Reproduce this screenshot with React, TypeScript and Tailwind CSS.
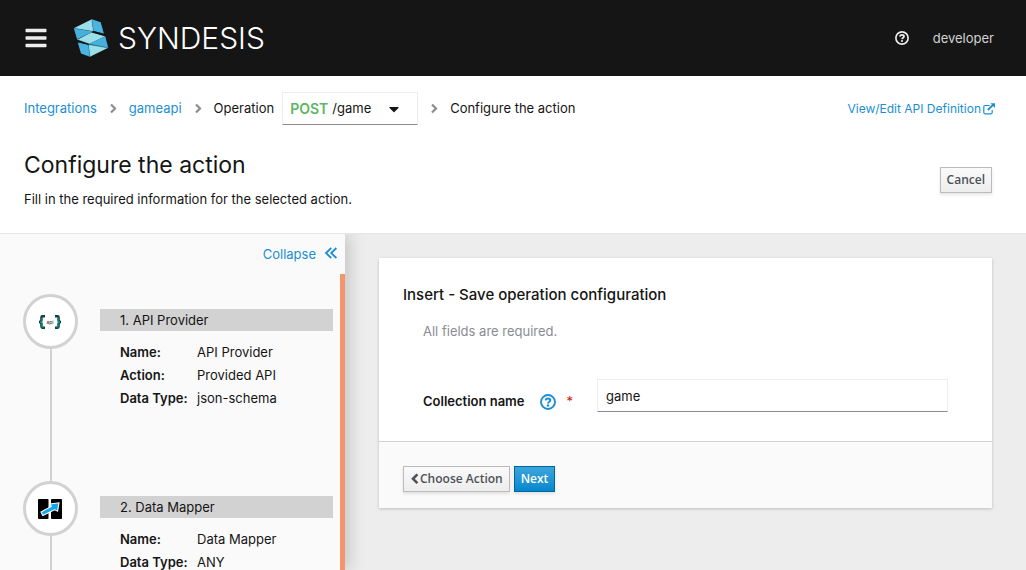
import { useState } from "react";
import { FaBars, FaCaretDown } from "react-icons/fa";

type Step = { title: string; icon: "api" | "mapper"; details: [string, string][] };

const steps: Step[] = [
  {
    title: "1. API Provider",
    icon: "api",
    details: [
      ["Name:", "API Provider"],
      ["Action:", "Provided API"],
      ["Data Type:", "json-schema"],
    ],
  },
  {
    title: "2. Data Mapper",
    icon: "mapper",
    details: [
      ["Name:", "Data Mapper"],
      ["Data Type:", "ANY"],
    ],
  },
];

function Logo() {
  return (
    <svg viewBox="220 56 107 116" className="h-[38px] w-9" aria-hidden="true">
      <polygon fill="#9bdfeb" points="221,84 276,57 281,94" />
      <polygon fill="#4ab5e0" points="276,57 303,66 313,101 281,93" />
      <polygon fill="#45b0dc" points="221,84 281,94 231,118" />
      <polygon fill="#9bdfeb" points="231,119 275,97 317,109 268,132" />
      <polygon fill="#45b0dc" points="317,109 326,144 267,132" />
      <polygon fill="#9bdfeb" points="326,144 270,171 266,134" />
      <polygon fill="#4ab5e0" points="233,127 266,134 270,171 243,161" />
      <path
        d="M221 84 281 94 276 57M281 94 313 101M231 118 268 132 326 144 266 134 270 171"
        fill="none"
        stroke="#2b7f9e"
        strokeWidth="1.5"
      />
      <path d="M275 96 281 93 313 101 317 109Z M231 119 268 132 266 135 233 127Z" fill="#151515" />
    </svg>
  );
}

function HelpIcon({ className }: { className: string }) {
  return (
    <svg viewBox="0 0 16 16" className={className} fill="none" stroke="currentColor" aria-hidden="true">
      <circle cx="8" cy="8" r="7" strokeWidth="1.9" />
      <path d="M5.7 6.4C5.8 5 6.8 4.4 8 4.4s2.3.7 2.3 1.8c0 1.6-2.2 1.5-2.2 3.2" strokeWidth="2" />
      <circle cx="8" cy="11.5" r="1.2" fill="currentColor" stroke="none" />
    </svg>
  );
}

function ApiIcon() {
  return (
    <svg viewBox="0 0 25 14" className="h-3.5 w-[25px]" fill="none" aria-hidden="true">
      <path d="M7 1.2H4.4Q3.4 1.2 3.4 2.4V5Q3.4 7 1 7Q3.4 7 3.4 9V11.6Q3.4 12.8 4.4 12.8H7" stroke="#173d40" strokeWidth="2.4" />
      <path d="M4 2.5V5Q4 7 2 7Q4 7 4 9V11.8H6" stroke="#129488" strokeWidth="1.3" />
      <path d="M17 1.2H19.6Q20.6 1.2 20.6 2.4V5Q20.6 7 23 7Q20.6 7 20.6 9V11.6Q20.6 12.8 19.6 12.8H17" stroke="#173d40" strokeWidth="2.4" />
      <path d="M20 2.5V5Q20 7 22 7Q20 7 20 9V11.8H18" stroke="#129488" strokeWidth="1.3" />
      <text x="12" y="8.6" fontSize="5" textAnchor="middle" fill="#222" fontFamily="Inter, sans-serif">
        api
      </text>
    </svg>
  );
}

function MapperIcon() {
  return (
    <svg viewBox="0 0 25 20" className="h-5 w-[25px]" aria-hidden="true">
      <rect width="10.5" height="20" rx="0.8" fill="#000" />
      <rect x="13" width="11" height="20" rx="0.8" fill="#000" />
      <path
        d="M3 13 13.2 7.4 12.2 5 21 3.8 19.6 12.2 17 10.8 15.4 11.2 4.8 16.6Z"
        fill="#13a7ee"
        stroke="#fff"
        strokeWidth="1.1"
      />
    </svg>
  );
}

function Separator() {
  return (
    <svg viewBox="0 0 14 14" className="size-3.5" fill="none" stroke="#8b8d8f" strokeWidth="2.2" aria-hidden="true">
      <path d="M5 2.5 9 6.5 5 10.5" />
    </svg>
  );
}

function CollapseIcon() {
  return (
    <svg viewBox="0 0 14 14" className="size-3.5" fill="none" stroke="currentColor" strokeWidth="1.8" aria-hidden="true">
      <path d="M7.2 1 2 6 7.2 11M12.4 1 7.2 6 12.4 11" />
    </svg>
  );
}

function ChevronLeftIcon() {
  return (
    <svg viewBox="0 0 10 12" className="h-3 w-2.5" fill="none" stroke="currentColor" strokeWidth="2.6" aria-hidden="true">
      <path d="M7.4 1.4 3 5.8 7.4 10.2" />
    </svg>
  );
}

function ExternalLinkIcon() {
  return (
    <svg viewBox="0 0 12 12" className="size-3" fill="none" stroke="currentColor" aria-hidden="true">
      <path d="M6.6 2.5H2Q.8 2.5.8 3.7V9.6Q.8 10.8 2 10.8H8Q9.2 10.8 9.2 9.6V7" strokeWidth="1.2" />
      <path d="M4.8 7 10 1.8" strokeWidth="1.9" />
      <path d="M7.4.3H12V4.9Z" fill="currentColor" stroke="none" />
    </svg>
  );
}

const defaultButton =
  "flex h-[26px] items-center border border-[#bbb] bg-linear-to-b from-[#fafafa] to-[#ededed] px-1.5 font-['Open_Sans',sans-serif] text-xs font-semibold text-[#4d5258] shadow-[0_2px_3px_rgba(3,3,3,0.1)]";

export default function App() {
  const [collection, setCollection] = useState("game");

  return (
    <div className="flex h-screen flex-col bg-white font-['Inter','Liberation_Sans',sans-serif] text-[13px] leading-[21px] text-[#151515]">
      <header className="flex h-19 shrink-0 items-center bg-[#151515] px-6 text-white">
        <button type="button" aria-label="Toggle navigation" className="mr-[25px]">
          <FaBars className="size-6 text-[#ededed]" />
        </button>
        <a href="#home" className="flex items-center gap-[9px]">
          <Logo />
          <span className="font-[Inter,sans-serif] text-3xl leading-9 font-light">SYNDESIS</span>
        </a>
        <button type="button" aria-label="Help" className="ml-auto">
          <HelpIcon className="size-3.5 text-[#ededed]" />
        </button>
        <button type="button" className="mr-2 ml-6 text-[#d2d2d2]">
          developer
        </button>
      </header>

      <section className="shrink-0 border-b border-[#e6e6e6] px-6 pt-4 pb-[23px]">
        <div className="flex items-center">
          <nav aria-label="Breadcrumb" className="flex items-center gap-[9px]">
            <a href="#integrations" className="text-[#1b8fd1]">Integrations</a>
            <Separator />
            <a href="#gameapi" className="text-[#1b8fd1]">gameapi</a>
            <Separator />
            <div className="flex items-center gap-2">
              <span>Operation</span>
              <button
                type="button"
                aria-haspopup="listbox"
                className="flex h-[33px] w-34 items-center border border-[#ededed] border-b-[#8a8d90] px-[7px]"
              >
                <span className="mr-1 text-sm font-semibold text-[#5cb563]">POST</span>
                <span>/game</span>
                <FaCaretDown className="mr-2 ml-auto size-4" aria-hidden="true" />
              </button>
            </div>
            <Separator />
            <span>Configure the action</span>
          </nav>
          <a href="#definition" className="mr-[7px] ml-auto flex items-center gap-0.5 text-xs text-[#1b8fd1]">
            View/Edit API Definition
            <ExternalLinkIcon />
          </a>
        </div>
        <div className="flex items-center justify-between pt-6 pr-2.5">
          <div>
            <h1 className="text-[23px] leading-8">Configure the action</h1>
            <p className="pt-2">Fill in the required information for the selected action.</p>
          </div>
          <button type="button" className={defaultButton}>Cancel</button>
        </div>
      </section>

      <div className="flex min-h-0 flex-1">
        <aside className="z-10 flex w-[345px] shrink-0 flex-col bg-[#fafafa] shadow-[4px_0_16px_rgba(3,3,3,0.18)] [clip-path:inset(0_-32px_0_0)]">
          <button type="button" className="flex h-10 shrink-0 items-center gap-2 self-end pr-[7px] text-[#1b8fd1]">
            Collapse
            <CollapseIcon />
          </button>
          <ol className="min-h-0 flex-1 overflow-y-auto border-r-[5px] border-[#f4956e] pt-5 [scrollbar-width:none]">
            {steps.map((step) => (
              <li key={step.title} className="flex min-h-[187px] gap-[22px] pr-[7px] pl-[23px]">
                <div className="flex flex-col items-center">
                  <span className="flex size-[55px] shrink-0 items-center justify-center rounded-full border-[3px] border-[#d2d2d2] bg-white">
                    {step.icon === "api" ? <ApiIcon /> : <MapperIcon />}
                  </span>
                  <span className="w-0.5 flex-1 bg-[#d2d2d2]" />
                </div>
                <div className="flex-1 pt-[15px]">
                  <h2 className="bg-[#d2d2d2] px-5 leading-[22px]">{step.title}</h2>
                  <dl className="grid grid-cols-[77px_1fr] pt-[10px] pl-5 leading-[23px]">
                    {step.details.map(([term, value]) => (
                      <div key={term} className="contents">
                        <dt className="font-semibold whitespace-nowrap">{term}</dt>
                        <dd>{value}</dd>
                      </div>
                    ))}
                  </dl>
                </div>
              </li>
            ))}
          </ol>
        </aside>

        <main className="flex-1 overflow-y-auto bg-[#ededed] px-[34px] py-6">
          <form className="bg-white shadow-[0_1px_3px_rgba(3,3,3,0.2)]" onSubmit={(e) => e.preventDefault()}>
            <h2 className="px-6 pt-[25px] text-[15px] leading-6 font-medium">Insert - Save operation configuration</h2>
            <p className="px-11 pt-[14px] text-[#8a8d90]">All fields are required.</p>
            <div className="flex items-center px-11 pt-[37px] pb-[29px]">
              <div className="flex w-[174px] shrink-0 items-center pt-3">
                <label htmlFor="collection" className="font-semibold">Collection name</label>
                <button type="button" aria-label="More information" className="ml-[15px]">
                  <HelpIcon className="size-4 text-[#1b8fd1]" />
                </button>
                <span className="ml-[11px] text-[#c9190b]">*</span>
              </div>
              <input
                id="collection"
                type="text"
                value={collection}
                onChange={(e) => setCollection(e.target.value)}
                className="h-[33px] min-w-0 flex-1 border border-[#ededed] border-b-[#8a8d90] px-2 outline-none"
              />
            </div>
            <div className="flex gap-1 border-t border-[#d2d2d2] bg-[#fafafa] px-6 pt-6 pb-4">
              <button type="button" className={defaultButton}>
                <ChevronLeftIcon />
                Choose Action
              </button>
              <button
                type="submit"
                className="h-[26px] border border-[#00659c] bg-linear-to-b from-[#39a5dc] to-[#0088ce] px-1.5 font-['Open_Sans',sans-serif] text-xs font-semibold text-white shadow-[0_2px_3px_rgba(3,3,3,0.1)]"
              >
                Next
              </button>
            </div>
          </form>
        </main>
      </div>
    </div>
  );
}
